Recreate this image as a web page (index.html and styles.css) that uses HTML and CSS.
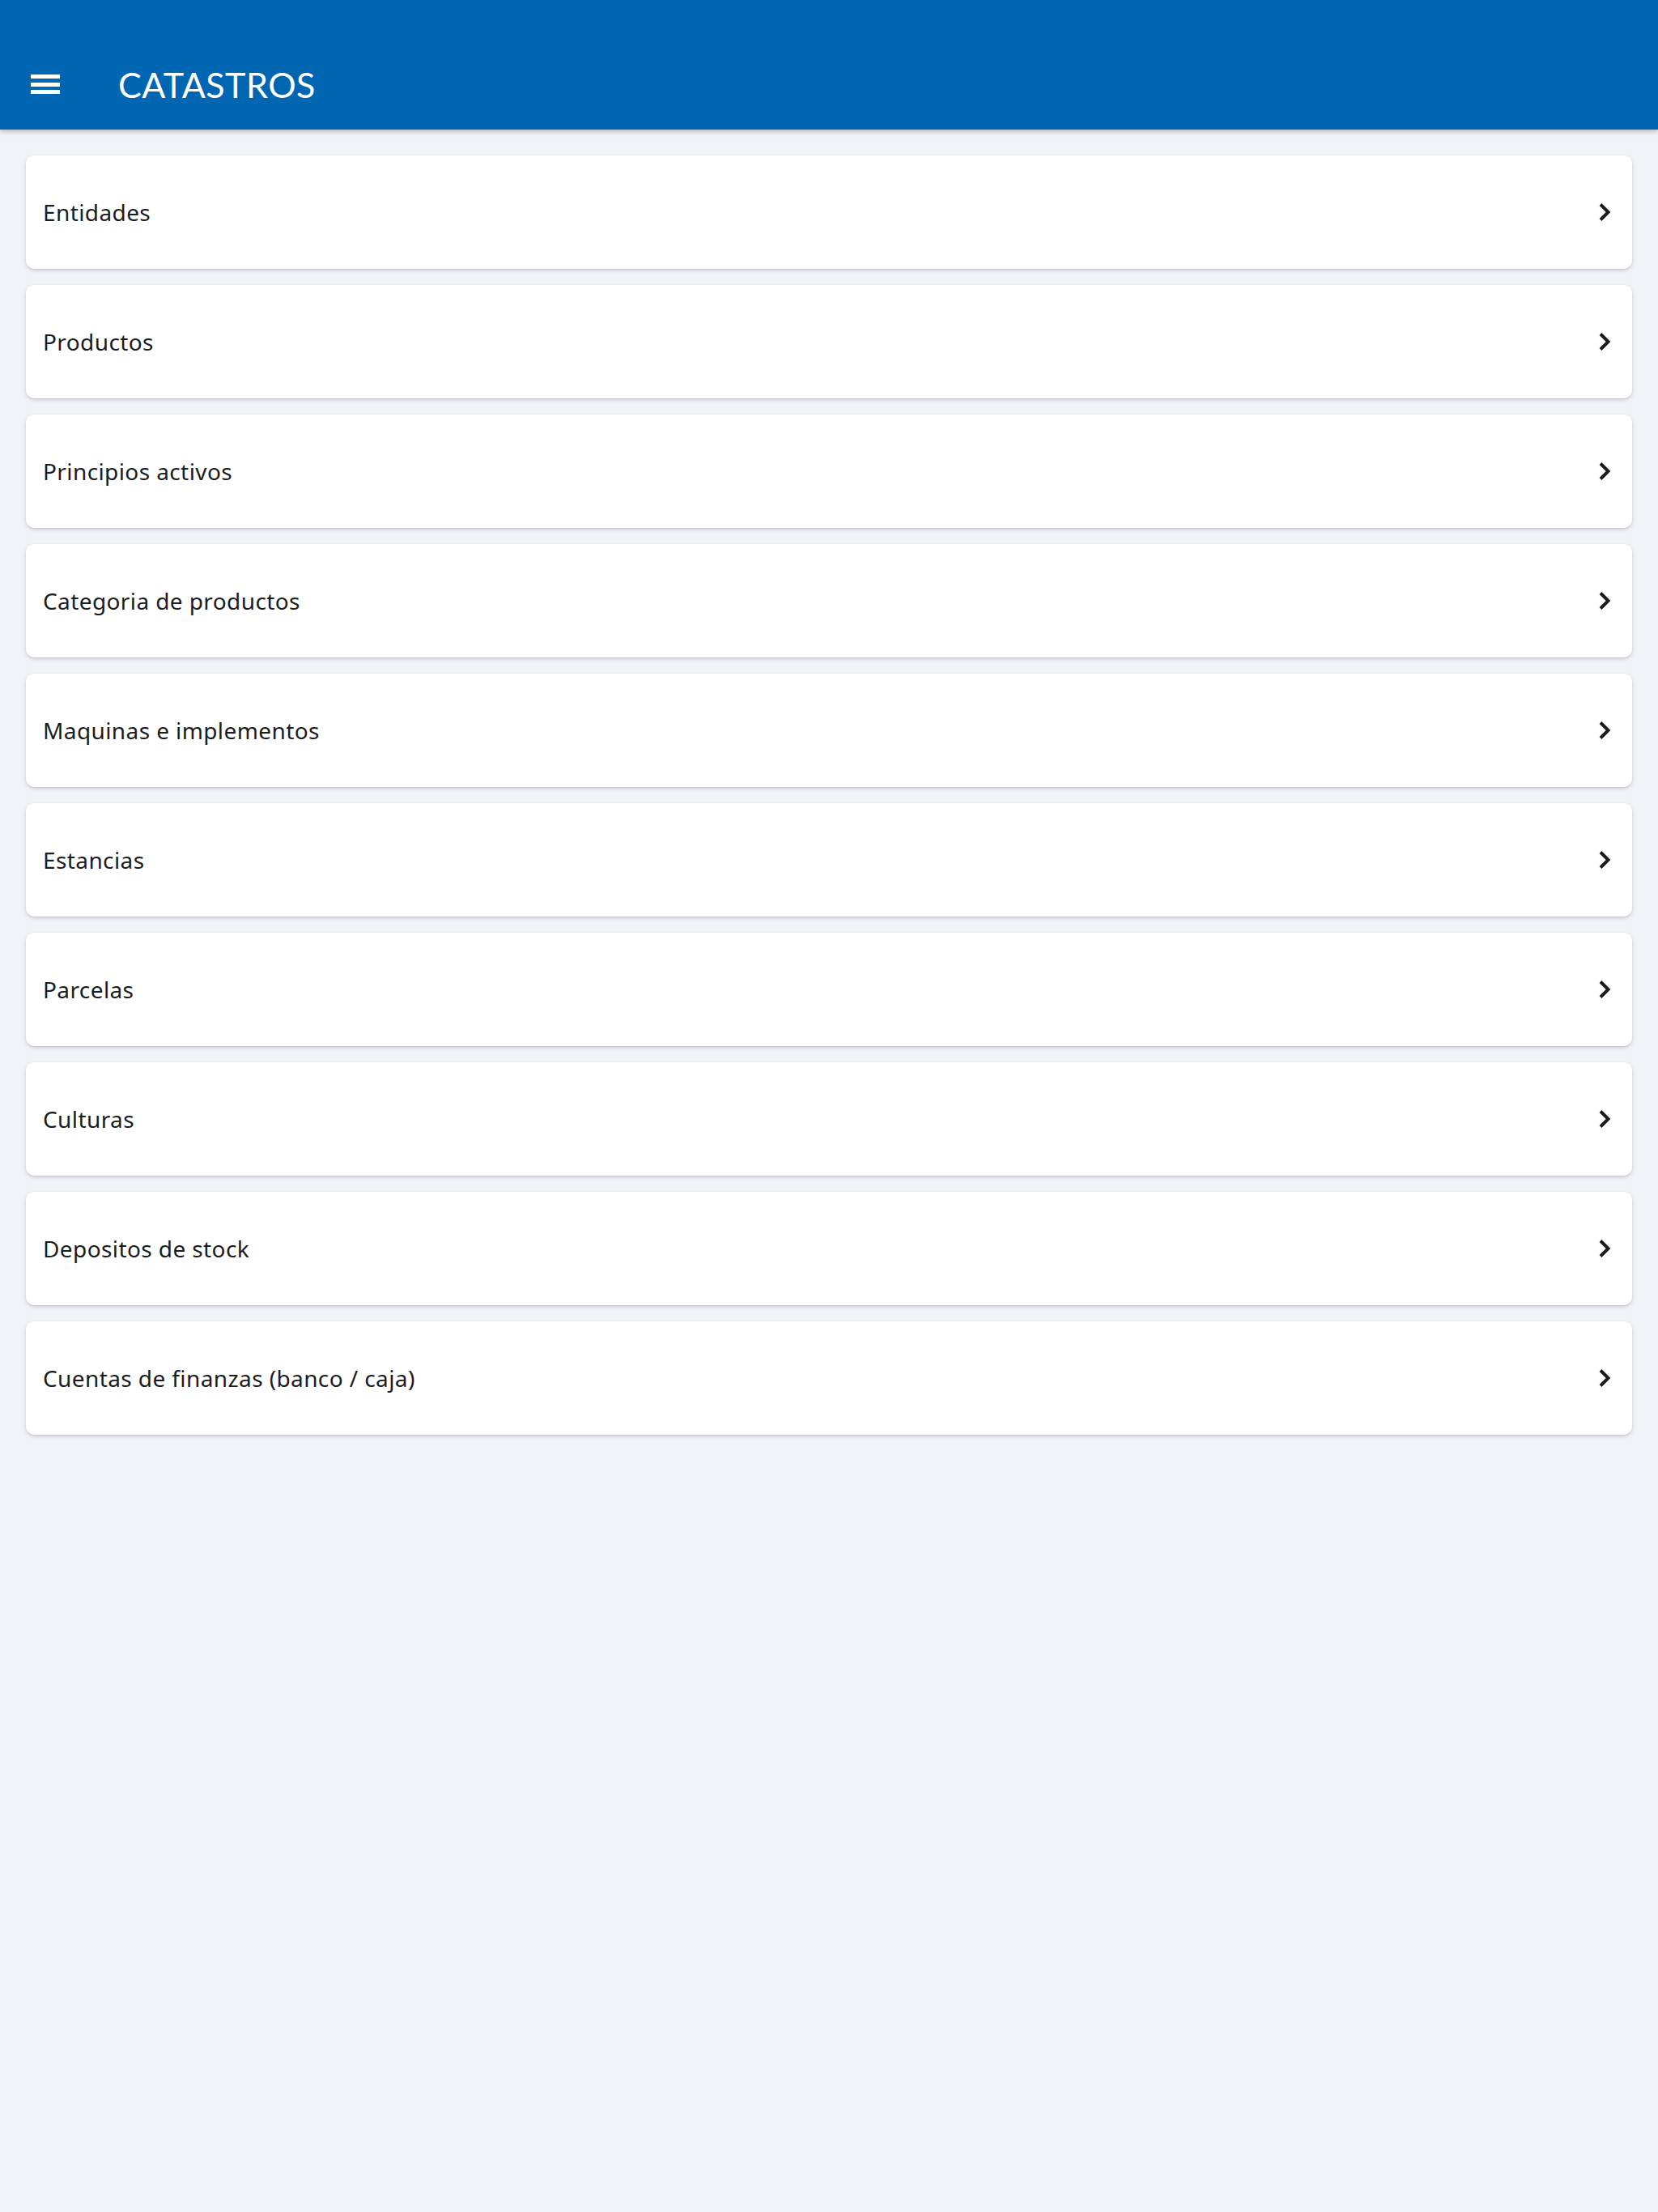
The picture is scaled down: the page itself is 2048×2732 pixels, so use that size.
FILE: index.html
```html
<!DOCTYPE html>
<html lang="es">
<head>
<meta charset="utf-8">
<title>Catastros</title>
<link rel="stylesheet" href="styles.css">
</head>
<body>
<header class="appbar">
  <div class="toolbar">
    <button class="menu-btn" aria-label="Menu">
      <span class="bar"></span><span class="bar"></span><span class="bar"></span>
    </button>
    <h1 class="title">CATASTROS</h1>
  </div>
</header>
<main class="list">
  <a class="card" href="#"><span class="label">Entidades</span><svg class="chev" viewBox="0 0 24 24"><polyline points="3,2.5 12.5,12 3,21.5"/></svg></a>
  <a class="card" href="#"><span class="label">Productos</span><svg class="chev" viewBox="0 0 24 24"><polyline points="3,2.5 12.5,12 3,21.5"/></svg></a>
  <a class="card" href="#"><span class="label">Principios activos</span><svg class="chev" viewBox="0 0 24 24"><polyline points="3,2.5 12.5,12 3,21.5"/></svg></a>
  <a class="card" href="#"><span class="label">Categoria de productos</span><svg class="chev" viewBox="0 0 24 24"><polyline points="3,2.5 12.5,12 3,21.5"/></svg></a>
  <a class="card" href="#"><span class="label">Maquinas e implementos</span><svg class="chev" viewBox="0 0 24 24"><polyline points="3,2.5 12.5,12 3,21.5"/></svg></a>
  <a class="card" href="#"><span class="label">Estancias</span><svg class="chev" viewBox="0 0 24 24"><polyline points="3,2.5 12.5,12 3,21.5"/></svg></a>
  <a class="card" href="#"><span class="label">Parcelas</span><svg class="chev" viewBox="0 0 24 24"><polyline points="3,2.5 12.5,12 3,21.5"/></svg></a>
  <a class="card" href="#"><span class="label">Culturas</span><svg class="chev" viewBox="0 0 24 24"><polyline points="3,2.5 12.5,12 3,21.5"/></svg></a>
  <a class="card" href="#"><span class="label">Depositos de stock</span><svg class="chev" viewBox="0 0 24 24"><polyline points="3,2.5 12.5,12 3,21.5"/></svg></a>
  <a class="card" href="#"><span class="label">Cuentas de finanzas (banco / caja)</span><svg class="chev" viewBox="0 0 24 24"><polyline points="3,2.5 12.5,12 3,21.5"/></svg></a>
</main>
</body>
</html>
```
FILE: styles.css
```css
* { box-sizing: border-box; }
html, body {
  margin: 0;
  padding: 0;
  background: #f0f3f8;
  font-family: "Noto Sans", "Lato", sans-serif;
  min-height: 2732px;
}
.appbar {
  height: 160px;
  background: #0066b2;
  padding-top: 56px;
  box-shadow: 0 2px 6px rgba(0, 0, 0, 0.28);
  position: relative;
  z-index: 1;
}
.toolbar {
  height: 96px;
  display: flex;
  align-items: center;
  padding-left: 38px;
}
.menu-btn {
  width: 36px;
  height: 24px;
  padding: 0;
  border: 0;
  background: none;
  display: flex;
  flex-direction: column;
  justify-content: space-between;
  cursor: pointer;
}
.bar {
  display: block;
  height: 5px;
  width: 36px;
  background: #ffffff;
}
.title {
  margin: 0 0 0 72px;
  color: #ffffff;
  font-family: "Lato", "Noto Sans", sans-serif;
  font-size: 43px;
  font-weight: 400;
  letter-spacing: 0.5px;
}
.list {
  display: flex;
  flex-direction: column;
  gap: 20px;
  padding: 32px 32px;
}
.card {
  height: 140px;
  display: flex;
  align-items: center;
  justify-content: space-between;
  background: #ffffff;
  border-radius: 10px;
  padding: 0 18px 0 21px;
  text-decoration: none;
  color: #1b1c1f;
  box-shadow: 0 2px 5px rgba(0, 0, 0, 0.14), 0 1px 2px rgba(0, 0, 0, 0.08);
}
.label {
  font-size: 28px;
  letter-spacing: 0.4px;
}
.chev {
  width: 24px;
  height: 24px;
  fill: none;
  stroke: #1b1c1f;
  stroke-width: 4;
  stroke-linecap: butt;
  stroke-linejoin: miter;
}
```
